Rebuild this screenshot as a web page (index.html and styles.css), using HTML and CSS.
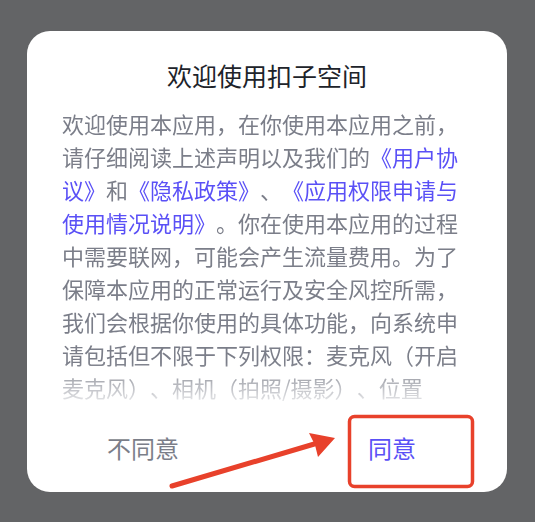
FILE: index.html
```html
<!DOCTYPE html>
<html lang="zh-CN">
<head>
    <meta charset="UTF-8">
    <meta name="viewport" content="width=device-width, initial-scale=1.0">
    <title>欢迎使用扣子空间</title>
    <link rel="stylesheet" href="styles.css">
</head>
<body>
    <div class="dialog">
        <h1 class="dialog-title">欢迎使用扣子空间</h1>

        <div class="dialog-body">
            <p>欢迎使用本应用，在你使用本应用之前，请仔细阅读上述声明以及我们的<a href="#">《用户协议》</a>和<a href="#">《隐私政策》</a>、<a href="#">《应用权限申请与使用情况说明》</a>。你在使用本应用的过程中需要联网，可能会产生流量费用。为了保障本应用的正常运行及安全风控所需，我们会根据你使用的具体功能，向系统申请包括但不限于下列权限：麦克风（开启麦克风）、相机（拍照/摄影）、位置</p>
        </div>

        <div class="dialog-footer">
            <button class="btn btn-cancel">不同意</button>
            <button class="btn btn-ok">同意</button>
        </div>
    </div>

    <!-- annotation drawn over the screenshot -->
    <svg class="markup" width="535" height="522" viewBox="0 0 535 522">
        <rect x="349.5" y="416.5" width="123" height="70" rx="5" fill="none" stroke="#e8412b" stroke-width="3.5"/>
        <line x1="172" y1="486" x2="316" y2="443.5" stroke="#e8412b" stroke-width="5" stroke-linecap="round"/>
        <polygon points="335,438 309,433 315,445 318,457" fill="#e8412b"/>
    </svg>
</body>
</html>
```

FILE: styles.css
```css
html, body {
    margin: 0;
    height: 100%;
}
body {
    background-color: #636466;
    font-family: "Noto Sans CJK SC", "Noto Sans", sans-serif;
    padding: 31px 28px 0 27px;
    box-sizing: border-box;
}
.dialog {
    width: 480px;
    height: 461px;
    background: #fff;
    border-radius: 23px;
    padding-top: 26px;
    box-sizing: border-box;
}
.dialog-title {
    margin: 0;
    font-size: 25px;
    font-weight: 400;
    line-height: 36px;
    text-align: center;
    color: #20232a;
}
.dialog-body {
    margin-top: 14px;
    padding: 0 35px;
    height: 297px;
    overflow: hidden;
    -webkit-mask-image: linear-gradient(to bottom, #000 86%, rgba(0, 0, 0, 0.15));
    mask-image: linear-gradient(to bottom, #000 86%, rgba(0, 0, 0, 0.15));
}
.dialog-body p {
    margin: 0;
    font-size: 22px;
    line-height: 33px;
    color: #7b7e89;
    text-spacing-trim: space-all;
}
.dialog-body a {
    color: #5a50f6;
    text-decoration: none;
}
.dialog-footer {
    height: 88px;
    display: flex;
    align-items: center;
    justify-content: space-between;
    padding: 0 91px 0 80px;
}
.btn {
    border: none;
    background: none;
    padding: 0;
    font-family: inherit;
    font-size: 24px;
    line-height: 32px;
    cursor: pointer;
}
.btn-cancel {
    color: #7b7e89;
}
.btn-ok {
    color: #5a50f6;
}
.markup {
    position: absolute;
    left: 0;
    top: 0;
    pointer-events: none;
}
```
